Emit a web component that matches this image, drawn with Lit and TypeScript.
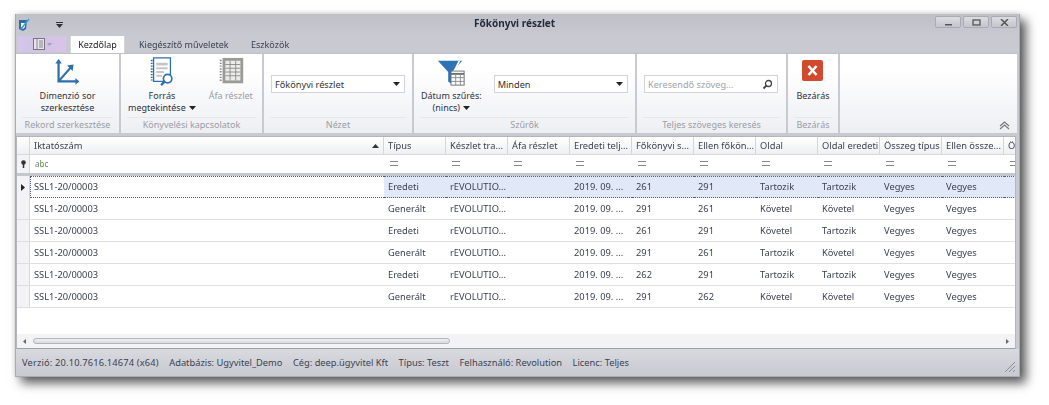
import { LitElement, html, css } from "lit";
import { customElement } from "lit/decorators.js";

const cols = ["Típus","Készlet tra...","Áfa részlet","Eredeti telj...","Főkönyvi s...","Ellen főkön...","Oldal","Oldal eredeti","Összeg típus","Ellen össze...","Ös"];
const rows = [
  ["Eredeti","261","291","Tartozik","Tartozik"],
  ["Generált","291","261","Követel","Követel"],
  ["Eredeti","261","291","Követel","Tartozik"],
  ["Generált","291","261","Tartozik","Követel"],
  ["Eredeti","262","291","Tartozik","Tartozik"],
  ["Generált","291","262","Követel","Követel"],
];

const arrow = html`<svg class="dd" width="7" height="4" viewBox="0 0 7 4"><path d="M0 0h7L3.500 4z" fill="#222"/></svg>`;

@customElement("app-root")
export class AppRoot extends LitElement {
  static styles = css`
    :host { display:block; width:1049px; height:405px; background:#fff; padding:14px 0 0 15px; box-sizing:border-box; overflow:hidden;
      font-family:"Noto Sans","Open Sans",sans-serif; font-size:9.3px; color:#333; }
    .win { width:1005px; height:363px; display:flex; flex-direction:column; background:#c8c9d1; box-sizing:border-box; filter:blur(.3px);
      border:1px solid #a9abb3; border-top:0; box-shadow:6px 6px 10px rgba(0,0,0,.65), 0 -1px 5px rgba(0,0,0,.12); }
    .title { height:22px; display:flex; align-items:center; position:relative; background:linear-gradient(#bfc0c7,#c8c9d1); flex:none; }
    .logo { margin:0 0 0 1px; }
    .qa { margin-left:25px; }
    .ttext { position:absolute; left:458px; top:2px; font-weight:700; font-size:10px; color:#222a3c; }
    .wbtns { margin-left:auto; margin-right:2px; display:flex; gap:2px; align-self:flex-start; margin-top:2px; }
    .wbtn { width:24px; height:10px; border:1px solid #a9abb3; border-radius:2px; background:linear-gradient(#dcdde2,#c5c6cd); display:flex; align-items:center; justify-content:center; }
    .tabs { height:17px; display:flex; flex:none; align-items:flex-end; padding-left:2px; font-size:9px; }
    .app-btn { width:48px; height:16px; background:linear-gradient(90deg,#d6c6ea,#cfc3e2 40%,#dbc3ea); margin-bottom:1px; display:flex; align-items:center; justify-content:center; gap:1px; }
    .tab { height:17px; display:flex; align-items:center; color:#3b4150; }
    .tab.on { background:#fff; border:1px solid #d5d6da; border-bottom:0; border-radius:2px 2px 0 0; width:55px; justify-content:center; margin:0 0 0 4px; height:19px; color:#222; box-sizing:border-box; }
    .t2 { padding-left:14px; width:126px; box-sizing:border-box; }
    .ribbon { height:79px; flex:none; display:flex; margin:0 2px 0 0; background:linear-gradient(#fff 20%,#eeeff3); position:relative; border-top:1px solid #bfc0c7; font-size:9px; }
    .grp { display:flex; flex-direction:column; border-right:2px solid #c9cad1; box-sizing:border-box; flex:none; }
    .gbody { height:63px; display:flex; position:relative; }
    .glabel { height:15px; margin:0 6px; padding-bottom:1px; box-sizing:border-box; display:flex; justify-content:center; align-items:center; color:#9a9ca6; border-top:1px solid #e6e7ea; white-space:nowrap; }
    .rbtn { display:flex; flex-direction:column; align-items:center; text-align:center; line-height:12px; color:#2f3342; flex:none; }
    .rbtn svg.ic { height:30px; margin:3px 0 3px; }
    .muted { color:#9a9ca6; }
    .dd { margin-left:3px; vertical-align:1px; }
    .combo { height:16px; width:125px; background:#fff; border:1px solid #d3d4da; display:flex; align-items:center; padding:0 4px 0 3px; box-sizing:content-box; margin-top:21px; justify-content:space-between; color:#333; font-size:9.2px; }
    .combo.search { color:#a2a3ab; }
    .collapse { position:absolute; right:7px; bottom:3px; }
    .sep { height:3px; flex:none; }
    .grid { flex:1; background:#fff; margin:0 3px 0 0; border:1px solid #b5b6bd; border-bottom:0; display:flex; flex-direction:column; overflow:hidden; }
    .row { display:grid; grid-template-columns:13px 354px repeat(10,62px) 20px; flex:none; }
    .hdr { height:18px; background:linear-gradient(#fff,#eff0f3); border-bottom:1px solid #d8d9de; box-sizing:border-box; }
    .hdr > div { display:flex; align-items:center; padding-left:4px; border-right:1px solid #d5d6da; white-space:nowrap; overflow:hidden; color:#3a3f4e; position:relative; }
    .hdr > div:first-child { padding:0; }
    .sort { position:absolute; right:4px; top:7px; }
    .flt { height:18px; border-bottom:3px solid #c6c7cd; box-sizing:content-box; }
    .flt > div { display:flex; align-items:center; padding:0 0 2px 5px; box-sizing:border-box; color:#777; overflow:hidden; }
    .flt > div:first-child { justify-content:center; padding:0; background:#f3f3f6; border-right:1px solid #d5d6da; }
    .abc { font-size:8px; color:#555; }
    .abc b { color:#4c9a3a; font-weight:400; }
    .eq { width:8px; height:3px; border-top:1px solid #888; border-bottom:1px solid #888; margin-left:1px; }
    .dr { height:22px; border-bottom:1px solid #dedfe3; box-sizing:border-box; color:#3c4150; }
    .dr > div { display:flex; align-items:center; padding:0 0 1px 4px; box-sizing:border-box; white-space:nowrap; }
    .dr > div:first-child { background:#f3f3f6; border-right:1px solid #d5d6da; justify-content:center; padding:0; }
    .dr.sel { border-bottom:0; }
    .dr.sel > div:not(:first-child) { background:#e1e8f8; border-top:1px dotted #555e78; border-bottom:1px dotted #555e78; }
    .dr.sel > div:nth-child(2) { background:#fff; border-left:1px dotted #555e78; padding-left:3px; }
    .dr.sel > div:last-child { border-right:1px dotted #555e78; }
    .empty { flex:1; }
    .hs { height:15px; flex:none; background:#f3f3f6; display:flex; align-items:center; padding:0 6px 0 6px; border-bottom:1px solid #9ea0a8; box-sizing:border-box; }
    .thumb { width:415px; height:4px; border:1px solid #b3b5bd; border-radius:3px; background:linear-gradient(#f0f0f3,#d8d9df); margin-left:7px; }
    .right { margin-left:auto; }
    .status { height:27px; flex:none; display:flex; gap:10.5px; align-items:center; padding:0 0 0 6px; box-sizing:border-box; background:linear-gradient(#d9dadf,#c8c9d1); color:#3c4150; position:relative; }
    .ver { letter-spacing:.16px; }
    .grip { position:absolute; right:4px; bottom:4px; }
  `;

  render() {
    return html`<div class="win">
      <div class="title">
        <svg class="logo" width="14" height="14" viewBox="0 0 14 14"><path d="M2 2h8l-1 9-3 2-4-2z" fill="#2e6ca6"/><path d="M4 5h4v4l-2 2-2-2z" fill="#fff"/><path d="M4 11L12 1" stroke="#3e9ad8" stroke-width="1.500"/></svg>
        <svg class="qa" width="7" height="6" viewBox="0 0 7 6"><path d="M0 0h7v1H0zM0 2h7L3.500 6z" fill="#333"/></svg>
        <div class="ttext">Főkönyvi részlet</div>
        <div class="wbtns">
          <div class="wbtn"><svg width="9" height="7"><path d="M1 5h7v1.500H1z" fill="#555"/></svg></div>
          <div class="wbtn"><svg width="9" height="7"><rect x="1" y="1" width="7" height="5" fill="none" stroke="#555" stroke-width="1.300"/></svg></div>
          <div class="wbtn"><svg width="9" height="7"><path d="M1 0l7 7M8 0L1 7" stroke="#555" stroke-width="1.500"/></svg></div>
        </div>
      </div>
      <div class="tabs">
        <div class="app-btn"><svg width="13" height="12"><rect x=".5" y=".5" width="11" height="11" fill="#e8e4ef" stroke="#777"/><path d="M4 1v10M6 3h4M6 5h4M6 7h4M6 9h4" stroke="#888"/></svg><svg width="5" height="3"><path d="M0 0h5L2.500 3z" fill="#a99bc0"/></svg></div>
        <div class="tab on">Kezdőlap</div>
        <div class="tab t2">Kiegészítő műveletek</div>
        <div class="tab">Eszközök</div>
      </div>
      <div class="ribbon">
        <div class="grp" style="width:105px">
          <div class="gbody" style="justify-content:center">
            <div class="rbtn"><svg class="ic" width="28" viewBox="0 0 28 32"><path d="M5 4v22h21M5 26L19 10" fill="none" stroke="#2e6fae" stroke-width="2.400"/><path d="M1.500 7L5 2l3.500 5zM23 22.500l4 3.500-4 3.500zM14 9l7-1-1 7z" fill="#2e6fae"/></svg>Dimenzió sor<br>szerkesztése</div>
          </div>
          <div class="glabel">Rekord szerkesztése</div>
        </div>
        <div class="grp" style="width:143px">
          <div class="gbody" style="padding-left:7px;gap:13px">
            <div class="rbtn"><svg class="ic" width="28" viewBox="0 0 28 32"><path d="M5 1h18v25H5z" fill="#fff" stroke="#2e6fae" stroke-width="1.400"/><path d="M3 3v22" stroke="#2e6fae" stroke-width="2" stroke-dasharray="1.500 1.500"/><path d="M8 6h12v3H8zM8 11h12v2H8zM8 15h8v2H8zM8 19h6v2H8z" fill="#c4c5c9"/><circle cx="20" cy="23" r="4.500" fill="#fff" stroke="#2e6fae" stroke-width="1.800"/><path d="M17 26l-4 4" stroke="#2e6fae" stroke-width="2.400"/></svg>Forrás<br><span>megtekintése${arrow}</span></div>
            <div class="rbtn muted"><svg class="ic" width="28" viewBox="0 0 28 32"><rect x="5" y="1" width="22" height="27" fill="#9a9a96"/><rect x="8" y="4" width="16" height="21" fill="#ecedea"/><path d="M8 8h16M8 12h16M8 16h16M8 20h16M13 4v21M19 4v21" stroke="#8d8e8a"/><path d="M3 3v24" stroke="#8a8a88" stroke-width="2" stroke-dasharray="1.500 1.500"/></svg>Áfa részlet</div>
          </div>
          <div class="glabel">Könyvelési kapcsolatok</div>
        </div>
        <div class="grp" style="width:150px">
          <div class="gbody" style="padding-left:7px"><div class="combo">Főkönyvi részlet${arrow}</div></div>
          <div class="glabel">Nézet</div>
        </div>
        <div class="grp" style="width:223px">
          <div class="gbody" style="padding-left:7px;gap:12px">
            <div class="rbtn"><svg class="ic" width="30" viewBox="0 0 30 32"><path d="M1 4h26L16 16v13l-4-3V16z" fill="#2e74b5"/><path d="M17 16l6-12h2L19 16z" fill="#fff"/><rect x="15" y="15" width="14" height="15" fill="#fff" stroke="#6d6e73"/><path d="M15 18h14" stroke="#6d6e73" stroke-width="2"/><path d="M15 22h14M15 26h14M20 18v12M25 18v12" stroke="#8a8b90"/></svg>Dátum szűrés:<br><span>(nincs)${arrow}</span></div>
            <div class="combo">Minden${arrow}</div>
          </div>
          <div class="glabel">Szűrők</div>
        </div>
        <div class="grp" style="width:151px">
          <div class="gbody" style="padding-left:7px"><div class="combo search">Keresendő szöveg...<svg width="11" height="11" viewBox="0 0 11 11"><circle cx="6.500" cy="4.500" r="3" fill="none" stroke="#444" stroke-width="1.300"/><path d="M4.500 6.500L1.500 9.500" stroke="#444" stroke-width="1.800"/></svg></div></div>
          <div class="glabel">Teljes szöveges keresés</div>
        </div>
        <div class="grp" style="width:52px">
          <div class="gbody" style="justify-content:center">
            <div class="rbtn"><svg class="ic" width="22" viewBox="0 0 22 30" style="margin:6px 0 0"><rect y="0" width="21" height="21" rx="2" fill="#d24a2e"/><path d="M6.500 6l8 9M14.500 6l-8 9" stroke="#fff" stroke-width="2.600"/></svg>Bezárás</div>
          </div>
          <div class="glabel">Bezárás</div>
        </div>
        <svg class="collapse" width="11" height="9" viewBox="0 0 11 9"><path d="M1 5l4.500-4 4.500 4M1 8l4.500-4 4.500 4" fill="none" stroke="#777" stroke-width="1.100"/></svg>
      </div>
      <div class="sep"></div>
      <div class="grid">
        <div class="row hdr">
          <div></div>
          <div>Iktatószám<svg class="sort" width="7" height="4"><path d="M0 4h7L3.500 0z" fill="#333"/></svg></div>
          ${cols.map(c => html`<div>${c}</div>`)}
        </div>
        <div class="row flt">
          <div><svg width="7" height="8" viewBox="0 0 7 8"><circle cx="3.500" cy="2.500" r="2.300" fill="#333"/><path d="M3.500 3v5" stroke="#333" stroke-width="1.500"/></svg></div>
          <div class="abc">a<b>b</b>c</div>
          ${cols.map(() => html`<div><span class="eq"></span></div>`)}
        </div>
        ${rows.map((r, i) => html`<div class="row dr ${i === 0 ? "sel" : ""}">
          <div>${i === 0 ? html`<svg width="4" height="7"><path d="M0 0l4 3.500L0 7z" fill="#222"/></svg>` : ""}</div>
          <div>SSL1-20/00003</div>
          <div>${r[0]}</div>
          <div>rEVOLUTIO...</div>
          <div></div>
          <div>2019. 09. ...</div>
          <div>${r[1]}</div>
          <div>${r[2]}</div>
          <div>${r[3]}</div>
          <div>${r[4]}</div>
          <div>Vegyes</div>
          <div>Vegyes</div>
          <div></div>
        </div>`)}
        <div class="empty"></div>
        <div class="hs">
          <svg width="3" height="5"><path d="M3 0v5L0 2.500z" fill="#666"/></svg>
          <div class="thumb"></div>
          <svg class="right" width="3" height="5"><path d="M0 0v5l3-2.500z" fill="#666"/></svg>
        </div>
      </div>
      <div class="status">
        <span class="ver">Verzió: 20.10.7616.14674 (x64)</span>
        <span>Adatbázis: Ugyvitel_Demo</span>
        <span>Cég: deep.ügyvitel Kft</span>
        <span>Típus: Teszt</span>
        <span>Felhasználó: Revolution</span>
        <span>Licenc: Teljes</span>
        <svg class="grip" width="10" height="10" viewBox="0 0 10 10"><path d="M0 10L10 0M4 10l6-6M8 10l2-2" stroke="#8e8f96"/></svg>
      </div>
    </div>`;
  }
}
